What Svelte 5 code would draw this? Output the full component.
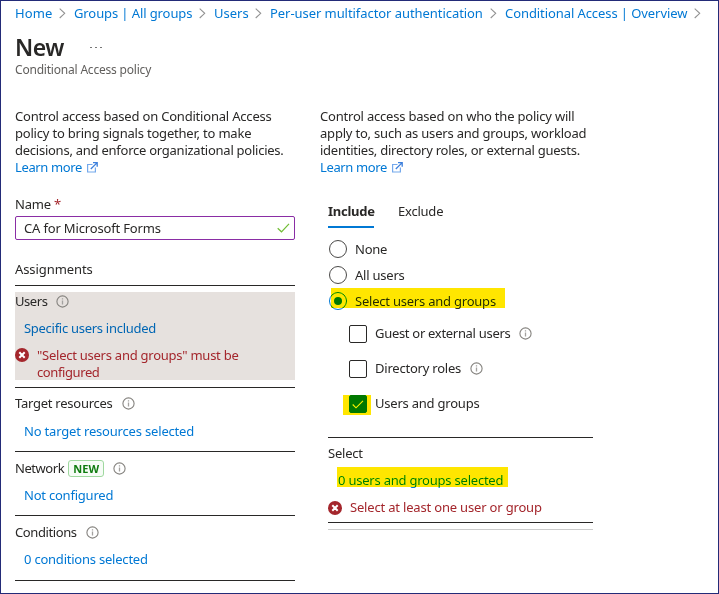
<script>
  const crumbs = [
    { text: 'Home', gap: 0.1, width: 59 },
    { text: 'Groups | All groups', gap: -0.1, width: 140 },
    { text: 'Users', gap: 0, width: 56 },
    { text: 'Per-user multifactor authentication', gap: -0.06, width: 235 },
    { text: 'Conditional Access | Overview', gap: -0.08, width: 200 }
  ];
</script>

{#snippet info()}
  <svg class="info" width="13" height="13" viewBox="0 0 13 13" fill="none">
    <circle cx="6.5" cy="6.5" r="5.6" stroke="#85837f" stroke-width="1.1" />
    <path d="M6.5 5.5V9.5M6.5 3.3V4.5" stroke="#a3a19f" stroke-width="1.3" />
  </svg>
{/snippet}

{#snippet fault()}
  <svg class="fault" width="14" height="14" viewBox="0 0 14 14">
    <circle cx="7" cy="7" r="7" fill="#a4262c" />
    <path d="M4.3 4.3L9.7 9.7M9.7 4.3L4.3 9.7" stroke="#fff" stroke-width="2" />
  </svg>
{/snippet}

{#snippet external()}
  <svg class="external" width="11" height="11" viewBox="0 0 11 11" fill="none">
    <path d="M5.5 2.5H.6V10H8.4V5.5" stroke="#75a9ec" stroke-width="1.2" />
    <path d="M3.8 7L9.7 1.1M6 .7H10.2V4.8" stroke="#3c7fdc" stroke-width="1.3" />
  </svg>
{/snippet}

<div class="page">
  <nav>
    {#each crumbs as c}
      <span class="crumb" style="width:{c.width}px">
        <a style="letter-spacing:{c.gap}px">{c.text}</a>
        <svg width="7" height="11" viewBox="0 0 7 11" fill="none"><path d="M.7.7L5.7 5.3L.7 10" stroke="#929292" stroke-width="1.1" /></svg>
      </span>
    {/each}
  </nav>
  <header>
    <h1>New</h1>
    <svg width="12" height="3" viewBox="0 0 12 3" fill="#777"><path d="M0 1h2v1H0zM5 1h2v1H5zM10 1h2v1h-2z" /></svg>
  </header>
  <div class="subtitle">Conditional Access policy</div>

  <main>
    <section class="left">
      <p>
        <span>Control access based on Conditional Access</span>
        <span>policy to bring signals together, to make</span>
        <span class="tight">decisions, and enforce organizational policies.</span>
        <a>Learn more {@render external()}</a>
      </p>
      <div class="label name">Name <b>*</b></div>
      <div class="input">
        <span>CA for Microsoft Forms</span>
        <svg width="13" height="10" viewBox="0 0 13 10" fill="none"><path d="M.7 5.2L4.5 8.8L12 .8" stroke="#71bd35" stroke-width="1.2" /></svg>
      </div>
      <div class="assign">Assignments</div>
      <div class="users">
        <div class="row"><span class="narrow">Users</span>{@render info()}</div>
        <a>Specific users included</a>
        <div class="error">{@render fault()}<div><span>"Select users and groups" must be</span><span class="word">configured</span></div></div>
      </div>
      <div class="item target">
        <div class="row"><span>Target resources</span>{@render info()}</div>
        <a>No target resources selected</a>
      </div>
      <div class="item network">
        <div class="row"><span class="narrow">Network</span><em>NEW</em>{@render info()}</div>
        <a>Not configured</a>
      </div>
      <div class="item conditions">
        <div class="row"><span class="word">Conditions</span>{@render info()}</div>
        <a>0 conditions selected</a>
      </div>
    </section>

    <section class="right">
      <p>
        <span>Control access based on who the policy will</span>
        <span>apply to, such as users and groups, workload</span>
        <span class="tight">identities, directory roles, or external guests.</span>
        <a>Learn more {@render external()}</a>
      </p>
      <div class="panel">
        <div class="tabs"><span class="active">Include</span><span>Exclude</span></div>
        <div class="radio"><i></i><span>None</span></div>
        <div class="radio"><i></i><span>All users</span></div>
        <div class="radio on"><i></i><span>Select users and groups</span><mark></mark></div>
        <div class="check first"><i></i><span class="guest">Guest or external users</span>{@render info()}</div>
        <div class="check"><i></i><span>Directory roles</span>{@render info()}</div>
        <div class="check on">
          <i><svg width="12" height="9" viewBox="0 0 12 9" fill="none"><path d="M.7 4.5L4 7.8L11 .8" stroke="#fff" stroke-width="1.1" /></svg></i>
          <span>Users and groups</span><mark></mark>
        </div>
        <div class="select">
          <div class="caption">Select</div>
          <div class="chosen"><a>0 users and groups selected</a><mark></mark></div>
          <div class="missing">{@render fault()}<span>Select at least one user or group</span></div>
        </div>
        <div class="end"></div>
      </div>
    </section>
  </main>
</div>

<style>
  .page { box-sizing: border-box; width: 719px; height: 594px; border: 1px solid #232b78; background: #fff; color: #292827; font: 13px/17px "Noto Sans", "Open Sans", sans-serif; padding: 4px 0 0 14px; overflow: hidden; isolation: isolate; }
  .page * { box-sizing: border-box; white-space: nowrap; }
  svg { display: block; flex: none; }
  a { color: #0078d4; }
  nav { display: flex; height: 17px; }
  .crumb { display: flex; align-items: center; justify-content: space-between; flex: none; padding-right: 8px; }
  .crumb:last-child { padding-right: 4px; }
  header { display: flex; align-items: center; gap: 26px; height: 36px; margin-top: 7px; }
  h1 { margin: 0; width: 49px; font-size: 23px; line-height: 36px; font-weight: 600; letter-spacing: -.5px; }
  .subtitle { font-size: 12px; color: #605e5c; line-height: 16px; margin-top: -3px; letter-spacing: -.2px; }
  main { display: flex; margin-top: 30px; letter-spacing: -.22px; }
  .left { width: 280px; margin-right: 25px; }
  .right { width: 274px; }
  p { margin: 0; height: 68px; letter-spacing: -.2px; }
  p span { display: block; }
  p .tight { letter-spacing: -.25px; }
  p a { display: flex; align-items: center; gap: 5px; letter-spacing: -.36px; }
  .name { margin-top: 20px; }
  .name b { color: #a4262c; font-weight: 400; }
  .input { height: 24px; margin-top: 3px; border: 1px solid #8a2da5; border-radius: 2px; display: flex; align-items: center; justify-content: space-between; padding: 0 4px 0 8px; letter-spacing: -.16px; }
  .assign { height: 46px; padding-top: 21px; border-bottom: 1px solid #292827; letter-spacing: -.08px; }
  .users { background: #e6e1de; height: 88px; margin: 6px 0 7px; padding-top: 1px; }
  .row { display: flex; align-items: center; height: 17px; }
  .narrow { letter-spacing: -.45px; }
  .word { letter-spacing: -.4px; }
  .row .info { margin-left: 9px; }
  .target .row, .network .row { letter-spacing: -.25px; }
  .users > a { display: block; padding-left: 9px; margin-top: 10px; color: #0066b4; letter-spacing: -.28px; }
  .error { display: flex; color: #a4262c; margin-top: 10px; letter-spacing: -.25px; }
  .error .fault { margin-top: 1px; }
  .error span { display: block; }
  .error div { margin-left: 8px; }
  .item { border-top: 1px solid #292827; height: 64px; padding-top: 8px; }
  .target { padding-top: 7px; }
  .item a { display: block; padding-left: 9px; margin-top: 10px; }
  .target a { margin-top: 11px; letter-spacing: -.18px; }
  .conditions { height: 66px; border-bottom: 1px solid #292827; }
  em { font: 700 11px/15px "Noto Sans", sans-serif; color: #107c10; border: 1px solid #9fd89f; border-radius: 3px; background: #f6fcf6; width: 36px; height: 17px; text-align: center; margin-left: 4px; letter-spacing: 0; }
  .panel { margin-left: 8px; width: 265px; }
  .tabs { display: flex; gap: 24px; height: 60px; padding-top: 27px; }
  .active { font-weight: 700; border-bottom: 2px solid #0078d4; height: 25px; width: 46px; letter-spacing: -.25px; }
  .radio { display: flex; align-items: center; height: 26px; position: relative; padding-left: 1px; }
  .radio i { width: 18px; height: 18px; border: 1px solid #4a4948; border-radius: 50%; margin-right: 8px; display: grid; place-items: center; }
  .radio.on i { border-color: #0078d4; }
  .radio.on i::after { content: ""; width: 8px; height: 8px; border-radius: 50%; background: #0078d4; }
  mark { position: absolute; background: #ffe600; mix-blend-mode: darken; height: 20px; }
  .radio mark { left: 3px; top: 0; width: 174px; }
  .check { display: flex; align-items: center; height: 18px; margin-top: 17px; padding-left: 21px; position: relative; }
  .check.first { margin-top: 11px; }
  .check i { width: 18px; height: 18px; border: 1px solid #292827; border-radius: 2px; margin-right: 8px; display: grid; place-items: center; }
  .check.on i { background: #0078d4; border-color: #0078d4; }
  .check span { margin-bottom: 2px; }
  .check .info { margin: 0 0 2px 9px; }
  .guest { letter-spacing: -.3px; }
  .check mark { left: 15px; top: 0; width: 28px; }
  .select { margin-top: 24px; border-top: 1px solid #292827; border-bottom: 1px solid #292827; height: 86px; padding-top: 7px; }
  .chosen { position: relative; margin-top: 10px; padding-left: 10px; }
  .chosen mark { left: 9px; top: -5px; width: 171px; }
  .missing { display: flex; align-items: center; gap: 8px; color: #a4262c; margin-top: 10px; letter-spacing: -.18px; }
  .end { height: 1px; background: #ccc; margin-top: 6px; }
</style>
